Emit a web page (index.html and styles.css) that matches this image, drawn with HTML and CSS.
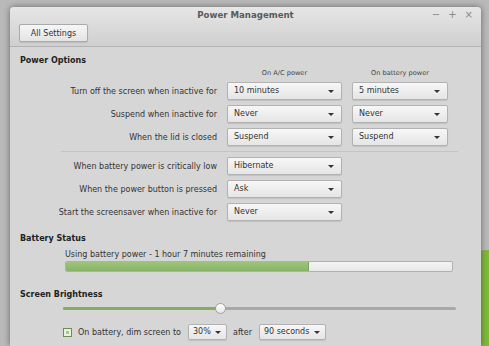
FILE: index.html
```html
<!DOCTYPE html>
<html lang="en">

<head>
    <meta charset="UTF-8" />
    <title>Power Management</title>
    <link rel="stylesheet" href="styles.css">
</head>

<body>
    <div class="wallpaper"></div>
    <div class="window">
        <!-- Titlebar -->
        <header class="titlebar">
            <div class="title">Power Management</div>
            <div class="controls">
                <span>&minus;</span>
                <span>+</span>
                <span>&times;</span>
            </div>
            <button class="btn">All Settings</button>
        </header>

        <div class="content">
            <!-- Power Options -->
            <h3>Power Options</h3>
            <div class="options">
                <div></div>
                <div class="colhead">On A/C power</div>
                <div class="colhead">On battery power</div>

                <div class="label">Turn off the screen when inactive for</div>
                <div class="combo">10 minutes</div>
                <div class="combo">5 minutes</div>

                <div class="label">Suspend when inactive for</div>
                <div class="combo">Never</div>
                <div class="combo">Never</div>

                <div class="label">When the lid is closed</div>
                <div class="combo">Suspend</div>
                <div class="combo">Suspend</div>

                <div class="sep"></div>

                <div class="label">When battery power is critically low</div>
                <div class="combo">Hibernate</div>
                <div></div>

                <div class="label">When the power button is pressed</div>
                <div class="combo">Ask</div>
                <div></div>

                <div class="label">Start the screensaver when inactive for</div>
                <div class="combo">Never</div>
                <div></div>
            </div>

            <!-- Battery -->
            <h3>Battery Status</h3>
            <div class="battery">
                <p>Using battery power - 1 hour 7 minutes remaining</p>
                <div class="bar"><div class="fill" style="width: 63%;"></div></div>
            </div>

            <!-- Brightness -->
            <h3>Screen Brightness</h3>
            <div class="slider">
                <div class="track"><div class="done" style="width: 40%;"></div><div class="knob"></div></div>
            </div>
            <div class="dim">
                <span class="check"></span>
                <span>On battery, dim screen to</span>
                <div class="combo small">30%</div>
                <span>after</span>
                <div class="combo mid">90 seconds</div>
            </div>
        </div>
    </div>
</body>

</html>
```

FILE: styles.css
```css
* {
    margin: 0;
    padding: 0;
    box-sizing: border-box;
}

body {
    font-family: "DejaVu Sans", sans-serif;
    font-size: 8px;
    color: #333;
    background: #b9b9b9;
    width: 489px;
    height: 346px;
    overflow: hidden;
    position: relative;
}

.wallpaper {
    position: absolute;
    left: 478px;
    top: 250px;
    width: 20px;
    height: 100px;
    background: #7fb83a;
    border-radius: 6px 0 0 0;
}

.window {
    position: relative;
    margin: 7px 0 0 10px;
    width: 471px;
    height: 339px;
    background: #d6d6d6;
    border-radius: 4px 4px 0 0;
    box-shadow: 0 0 6px rgba(0, 0, 0, 0.45);
}

/* Titlebar */
.titlebar {
    height: 40px;
    background: linear-gradient(#e6e6e6, #cfcfcf);
    border-bottom: 1px solid #b4b4b4;
    border-radius: 4px 4px 0 0;
    padding: 0 9px;
    position: relative;
}

.title {
    text-align: center;
    font-weight: bold;
    font-size: 8.6px;
    color: #5a5a5a;
    padding-top: 3px;
    height: 17px;
}

.controls {
    position: absolute;
    right: 8px;
    top: 2px;
    display: flex;
    gap: 8px;
    color: #8a8a8a;
    font-size: 10px;
}

.btn {
    font-family: inherit;
    font-size: 8px;
    color: #333;
    width: 69px;
    height: 18px;
    background: linear-gradient(#f6f6f6, #e4e4e4);
    border: 1px solid #aaa;
    border-radius: 2px;
    box-shadow: 0 1px 1px rgba(0, 0, 0, 0.1);
}

/* Content */
.content {
    padding: 9px 10px;
}

h3 {
    font-size: 8px;
    color: #222;
}

.options {
    display: grid;
    grid-template-columns: 1fr 115px 96px;
    column-gap: 10px;
    row-gap: 5px;
    margin: 4px 23px 13px 0;
    align-items: center;
}

.colhead {
    text-align: center;
    font-size: 6.6px;
    color: #444;
    height: 8px;
    line-height: 8px;
}

.label {
    text-align: right;
}

.combo {
    height: 18px;
    line-height: 16px;
    padding: 0 8px 0 6px;
    background: linear-gradient(#f7f7f7, #e5e5e5);
    border: 1px solid #b2b2b2;
    border-radius: 2px;
    box-shadow: 0 1px 1px rgba(0, 0, 0, 0.1);
    position: relative;
    color: #333;
    white-space: nowrap;
}

.combo::after {
    content: "";
    position: absolute;
    right: 7px;
    top: 7px;
    border-left: 3px solid transparent;
    border-right: 3px solid transparent;
    border-top: 3px solid #333;
}

.sep {
    grid-column: 1 / 4;
    height: 1px;
    background: #c4c4c4;
    margin-left: 41px;
    margin-right: -10px;
}

/* Battery */
.battery {
    padding-left: 45px;
    padding-right: 18px;
    margin: 7px 0 18px;
}

.battery p {
    margin-bottom: 2px;
}

.bar {
    height: 11px;
    background: linear-gradient(#f4f4f4, #e8e8e8);
    border: 1px solid #b0b0b0;
    border-radius: 2px;
    overflow: hidden;
}

.fill {
    height: 100%;
    background: linear-gradient(#9cc47a, #89b467);
    border-right: 1px solid #7ea35c;
}

/* Brightness */
.slider {
    padding: 8px 15px 0 43px;
}

.track {
    height: 3px;
    background: #a8a8a8;
    border-radius: 2px;
    position: relative;
}

.done {
    height: 100%;
    background: #85ad62;
    border-radius: 2px;
}

.knob {
    position: absolute;
    left: calc(40% - 5px);
    top: -4px;
    width: 11px;
    height: 11px;
    border-radius: 50%;
    background: linear-gradient(#fff, #e6e6e6);
    border: 1px solid #a0a0a0;
}

.dim {
    display: flex;
    align-items: center;
    gap: 6px;
    padding-left: 43px;
    margin-top: 14px;
}

.check {
    width: 9px;
    height: 9px;
    border: 1px solid #6f8e55;
    background: #a7c98a;
    box-shadow: inset 0 0 0 2px #e8f0e0;
}

.dim .combo {
    height: 16px;
    line-height: 14px;
    padding-left: 4px;
}

.dim .combo::after {
    top: 6px;
    right: 5px;
}

.dim .small {
    width: 39px;
    margin-left: 1px;
}

.dim .mid {
    width: 67px;
    margin-left: 1px;
}
```
